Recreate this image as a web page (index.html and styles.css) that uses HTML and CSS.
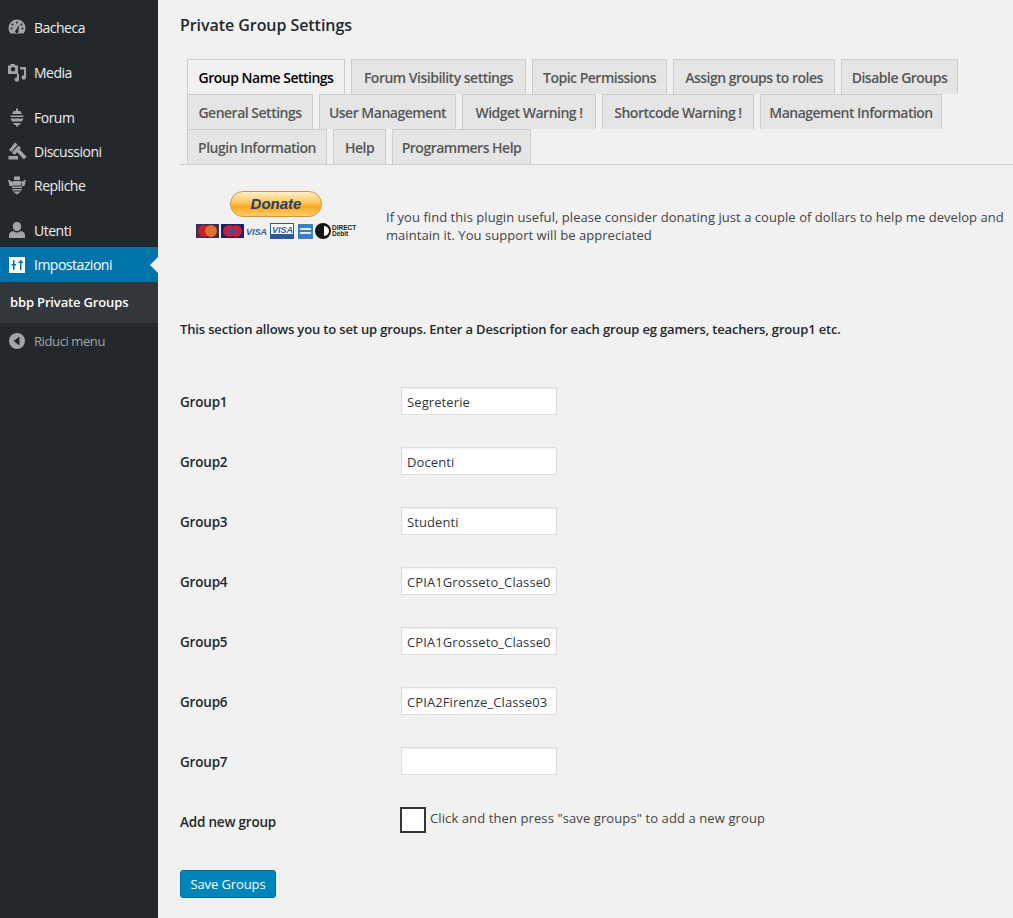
FILE: index.html
```html
<!DOCTYPE html>
<html lang="en">
<head>
    <meta charset="UTF-8">
    <title>Private Group Settings</title>
    <link rel="stylesheet" href="styles.css">
</head>
<body>

<div class="admin">
    <!--left menu-->
    <div class="sidebar">
        <a class="menu-item first" href="#">
            <svg class="ico" viewBox="0 0 20 20"><path d="M10 2.500a8.500 8.500 0 0 0-8.500 8.500c0 2 .8 4 2 5.500h13c1.200-1.500 2-3.500 2-5.500A8.500 8.500 0 0 0 10 2.500zM10 4.500a1 1 0 1 1 0 2 1 1 0 0 1 0-2zM5.500 6.500a1 1 0 1 1 0 2 1 1 0 0 1 0-2zM14.500 6.500a1 1 0 1 1 0 2 1 1 0 0 1 0-2zM4.500 10.500a1 1 0 1 1 0 2 1 1 0 0 1 0-2zM15.500 10.500a1 1 0 1 1 0 2 1 1 0 0 1 0-2zM12.500 7.500l-1.200 5.800a1.700 1.700 0 1 1-2.300-.5z" fill-rule="evenodd"/></svg>
            Bacheca
        </a>
        <a class="menu-item gap" href="#">
            <svg class="ico" viewBox="0 0 20 20"><path d="M3.500 2h4l1 1.500H11V12H1V3.500h2.500zM6 5a2.300 2.300 0 1 0 0 4.600A2.300 2.300 0 0 0 6 5z" fill-rule="evenodd"/><path d="M13 5h6v10.500a2.200 2.200 0 1 1-2-2.200V7.500h-4zM12 12v5.500a2.200 2.200 0 1 1-2-2.200V12z"/></svg>
            Media
        </a>
        <a class="menu-item gap" href="#">
            <svg class="ico" viewBox="0 0 20 20"><path d="M9 1.500h2V4h2.500L15 7H5l1.500-3H9zM3.500 8.500h13V10h-13zM3.500 11.500h13L15 14.500H5zM6 16h8l-1.500 2H11v1.500H9V18H7.500z"/></svg>
            Forum
        </a>
        <a class="menu-item" href="#">
            <svg class="ico" viewBox="0 0 20 20"><path d="M8 1.500l2.500 2-6 7.500L2 9zM11.500 4.500L14 7l-6.500 7L5 11.500zM10 11l2.500-2.500 7 7L17 18.500zM1.500 15h9.500v3.500H1.500z"/></svg>
            Discussioni
        </a>
        <a class="menu-item" href="#">
            <svg class="ico" viewBox="0 0 20 20"><path d="M7 1.500h6V5H7zM1 4.500L6 7v4H2.500zM19 4.500L14 7v4h3.500zM6.500 6h7l1.500 3v1.500H5V9zM5 11.500h10V13H5zM5 14h10l-.5 1.500h-9zM6 16.500h8L10 19.500z"/></svg>
            Repliche
        </a>
        <a class="menu-item gap" href="#">
            <svg class="ico" viewBox="0 0 20 20"><path d="M10 2a4.200 4.200 0 0 1 4.200 4.500C14.200 9 12.500 11 10 11S5.800 9 5.800 6.500A4.200 4.200 0 0 1 10 2zM6.500 11c1 1 2.200 1.500 3.500 1.500s2.500-.5 3.500-1.500c2.500.5 4.500 1.500 4.500 4v3H2v-3c0-2.500 2-3.500 4.500-4z"/></svg>
            Utenti
        </a>
        <a class="menu-item current" href="#">
            <svg class="ico" viewBox="0 0 20 20"><path d="M2 2h16v16H2zM6 5v4H4.500v1.500H6V15h1.500v-4.500H9V9H7.500V5zM13 5v1.500h-1.500V8H13v7h1.500V8H16V6.500h-1.500V5z" fill-rule="evenodd"/></svg>
            Impostazioni
        </a>
        <div class="submenu"><a href="#">bbp Private Groups</a></div>
        <a class="menu-item collapse" href="#">
            <svg class="ico" viewBox="0 0 20 20"><path d="M10 2a8 8 0 1 1 0 16 8 8 0 0 1 0-16zM12.500 5.500L6.500 10l6 4.500z" fill-rule="evenodd"/></svg>
            Riduci menu
        </a>
    </div>

    <div class="main">
        <h2 class="title">Private Group Settings</h2>

        <div class="tabs">
            <a class="tab active" href="#">Group Name Settings</a>
            <a class="tab" href="#">Forum Visibility settings</a>
            <a class="tab" href="#">Topic Permissions</a>
            <a class="tab" href="#">Assign groups to roles</a>
            <a class="tab" href="#">Disable Groups</a>
            <a class="tab" href="#">General Settings</a>
            <a class="tab" href="#">User Management</a>
            <a class="tab" href="#">Widget Warning !</a>
            <a class="tab" href="#">Shortcode Warning !</a>
            <a class="tab" href="#">Management Information</a>
            <a class="tab" href="#">Plugin Information</a>
            <a class="tab" href="#">Help</a>
            <a class="tab" href="#">Programmers Help</a>
        </div>

        <div class="donate">
            <div class="donate-pic">
                <div class="donate-btn">Donate</div>
                <svg class="cards" width="161" height="16" viewBox="0 0 161 16">
                    <rect x="0" y="1" width="23" height="14" fill="#3a2f55"/>
                    <circle cx="8" cy="8" r="6" fill="#c8202f"/>
                    <circle cx="15" cy="8" r="6" fill="#e0702a"/>
                    <rect x="25" y="1" width="23" height="14" fill="#14226e"/>
                    <circle cx="33" cy="8" r="6" fill="#c8202f"/>
                    <circle cx="40" cy="8" r="6" fill="#c8202f"/>
                    <rect x="34" y="6" width="5" height="4" fill="#2a52b0"/>
                    <text class="card-text" x="50" y="12" fill="#2f5f9f">VISA</text>
                    <rect x="74.500" y="0.500" width="23" height="15" fill="#fff" stroke="#2b5b9e"/>
                    <text class="card-text" x="76" y="10" fill="#2b5b9e">VISA</text>
                    <rect x="75" y="11" width="22" height="4" fill="#2b5b9e"/>
                    <rect x="102" y="1" width="15" height="15" fill="#3c7fc0"/>
                    <rect x="104" y="5" width="11" height="2" fill="#dfeaf5"/>
                    <rect x="104" y="9" width="11" height="2" fill="#dfeaf5"/>
                    <circle cx="127" cy="8" r="8" fill="#151515"/>
                    <path d="M128 3a5 5 0 0 1 0 10z" fill="#fff"/>
                    <text class="card-small" x="136" y="7">DIRECT</text>
                    <text class="card-small" x="136" y="13">Debit</text>
                </svg>
            </div>
            <p class="donate-text">If you find this plugin useful, please consider donating just a couple of dollars to help me develop and maintain it. You support will be appreciated</p>
        </div>

        <p class="intro">This section allows you to set up groups. Enter a Description for each group eg gamers, teachers, group1 etc.</p>

        <div class="form-row"><label>Group1</label><input type="text" value="Segreterie"></div>
        <div class="form-row"><label>Group2</label><input type="text" value="Docenti"></div>
        <div class="form-row"><label>Group3</label><input type="text" value="Studenti"></div>
        <div class="form-row"><label>Group4</label><input type="text" value="CPIA1Grosseto_Classe01"></div>
        <div class="form-row"><label>Group5</label><input type="text" value="CPIA1Grosseto_Classe02"></div>
        <div class="form-row"><label>Group6</label><input type="text" value="CPIA2Firenze_Classe03"></div>
        <div class="form-row"><label>Group7</label><input type="text" value=""></div>
        <div class="form-row add-row">
            <label>Add new group</label>
            <span class="check"></span>
            <span class="check-text">Click and then press "save groups" to add a new group</span>
        </div>

        <button class="save" type="button">Save Groups</button>
    </div>
</div>

</body>
</html>
```

FILE: styles.css
```css
* {
    margin: 0;
    padding: 0;
    box-sizing: border-box;
}

html, body {
    height: 100%;
    overflow: hidden;
}

body {
    background-color: #f1f1f1;
    color: #444;
    font-family: "Open Sans", "Noto Sans", sans-serif;
    font-size: 13px;
}

a {
    text-decoration: none;
}

.admin {
    display: flex;
    min-height: 918px;
}

/* left menu */
.sidebar {
    width: 158px;
    flex: none;
    background-color: #23282d;
    padding-top: 10px;
}

.menu-item {
    display: flex;
    align-items: center;
    height: 34px;
    padding-left: 7px;
    color: #eee;
    font-size: 14px;
    letter-spacing: -0.5px;
    position: relative;
}

.menu-item.gap {
    margin-top: 11px;
}

.ico {
    width: 20px;
    height: 20px;
    margin-right: 7px;
    fill: #a0a5aa;
    flex: none;
}

.menu-item.current {
    height: 35px;
    background-color: #0073aa;
    color: #fff;
}

.menu-item.current .ico {
    fill: #fff;
}

.menu-item.current::after {
    content: "";
    position: absolute;
    right: 0;
    top: 10px;
    border: 8px solid transparent;
    border-right-color: #f1f1f1;
    border-left: 0;
}

.submenu {
    height: 41px;
    background-color: #32373c;
    padding-left: 10px;
    line-height: 41px;
}

.submenu a {
    color: #fff;
    font-weight: 600;
    font-size: 13px;
    letter-spacing: -0.15px;
}

.menu-item.collapse {
    margin-top: 1px;
    color: #a0a5aa;
    font-size: 13px;
    letter-spacing: -0.4px;
}

/* right side */
.main {
    flex: 1;
    min-width: 0;
    padding-left: 22px;
}

.title {
    margin-top: 14px;
    font-size: 16px;
    line-height: 22px;
    font-weight: 600;
    color: #23282d;
    letter-spacing: -0.06px;
}

.tabs {
    display: flex;
    flex-wrap: wrap;
    height: 106px;
    margin-top: 23px;
    padding-left: 1px;
    border-bottom: 1px solid #ccc;
}

.tab {
    height: 35px;
    margin-left: 6px;
    border: 1px solid #ccc;
    border-bottom: 0;
    background-color: #e5e5e5;
    color: #555;
    font-size: 14px;
    font-weight: 600;
    line-height: 35px;
    letter-spacing: -0.5px;
    text-align: center;
    white-space: nowrap;
}

/* tab widths, the text is not quite as wide as the real one */
.tab:nth-child(1) { width: 158px; }
.tab:nth-child(2) { width: 175px; }
.tab:nth-child(3) { width: 135px; }
.tab:nth-child(4) { width: 162px; }
.tab:nth-child(5) { width: 117px; }
.tab:nth-child(6) { width: 126px; }
.tab:nth-child(7) { width: 137px; }
.tab:nth-child(8) { width: 134px; }
.tab:nth-child(9) { width: 152px; }
.tab:nth-child(10) { width: 182px; }
.tab:nth-child(11) { width: 140px; }
.tab:nth-child(12) { width: 53px; }
.tab:nth-child(13) { width: 139px; }

.tab.active {
    background-color: #f1f1f1;
    color: #000;
}

.donate {
    display: flex;
    margin-top: 26px;
    height: 82px;
}

.donate-pic {
    width: 206px;
    flex: none;
    display: flex;
    flex-direction: column;
    align-items: flex-start;
}

.donate-btn {
    width: 92px;
    height: 26px;
    margin-left: 50px;
    border: 1px solid #d5953a;
    border-radius: 13px;
    background: linear-gradient(#fff0c8 0%, #ffc65c 45%, #f9a81f 60%, #ffca6a 100%);
    color: #21406e;
    font-family: "Liberation Sans", sans-serif;
    font-size: 15px;
    font-style: italic;
    font-weight: 700;
    line-height: 23px;
    text-align: center;
}

.cards {
    margin-top: 6px;
    margin-left: 16px;
}

.card-text {
    font-family: "Liberation Sans", sans-serif;
    font-size: 9px;
    font-style: italic;
    font-weight: 700;
}

.card-small {
    font-family: "Liberation Sans", sans-serif;
    font-size: 6.500px;
    font-weight: 700;
    fill: #222;
}

.donate-text {
    width: 624px;
    margin-top: 17px;
    line-height: 18px;
    letter-spacing: 0.05px;
    color: #444;
}

.intro {
    margin-top: 46px;
    font-weight: 600;
    color: #23282d;
    letter-spacing: -0.16px;
    line-height: 20px;
}

.form-row {
    display: flex;
    align-items: center;
    height: 60px;
    color: #23282d;
    font-size: 13.500px;
    font-weight: 600;
    letter-spacing: -0.2px;
}

.intro + .form-row {
    margin-top: 32px;
}

.form-row label {
    width: 221px;
    flex: none;
    margin-top: 1px;
}

.form-row input {
    width: 156px;
    height: 28px;
    padding: 2px 5px 0;
    border: 1px solid #ddd;
    background-color: #fff;
    color: #32373c;
    font-family: inherit;
    font-size: 13px;
    font-weight: 400;
    letter-spacing: 0.1px;
    box-shadow: inset 0 1px 2px rgba(0, 0, 0, .07);
}

.add-row .check {
    width: 26px;
    height: 26px;
    margin-left: -1px;
    margin-top: -2px;
    border: 2px solid #32373c;
    background-color: #fff;
}

.add-row .check-text {
    margin-left: 4px;
    margin-top: -6px;
    font-size: 13px;
    font-weight: 400;
    color: #444;
    letter-spacing: 0.1px;
}

.save {
    display: block;
    width: 96px;
    height: 28px;
    margin-top: 19px;
    border: 1px solid #006799;
    border-radius: 3px;
    background-color: #0085ba;
    color: #fff;
    font-family: inherit;
    font-size: 13px;
    letter-spacing: -0.1px;
}
```
